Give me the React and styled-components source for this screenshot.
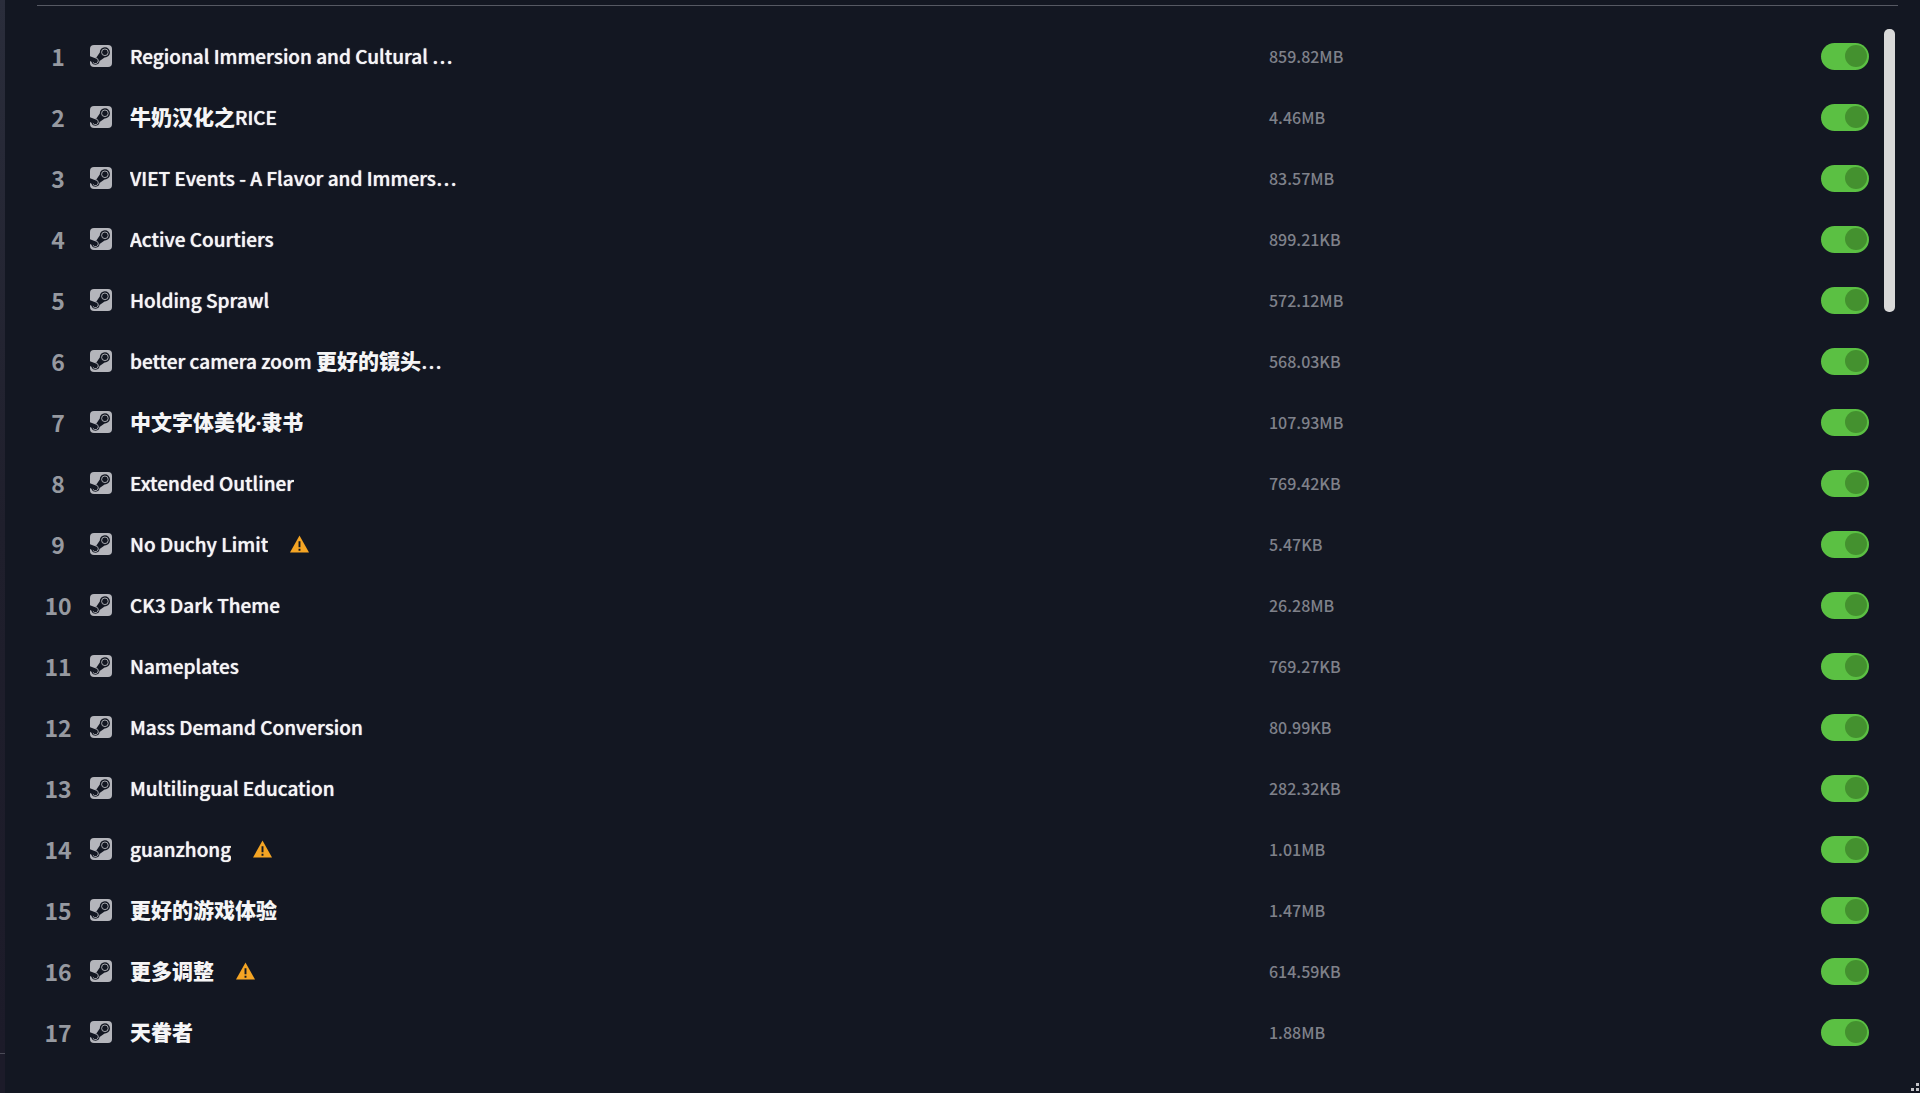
import styled, { createGlobalStyle } from 'styled-components';
import { useState } from 'react';

const INITIAL_MODS = [
	{ name: 'Regional Immersion and Cultural …', size: '859.82MB' },
	{ name: '牛奶汉化之RICE', size: '4.46MB' },
	{ name: 'VIET Events - A Flavor and Immers…', size: '83.57MB' },
	{ name: 'Active Courtiers', size: '899.21KB' },
	{ name: 'Holding Sprawl', size: '572.12MB' },
	{ name: 'better camera zoom 更好的镜头…', size: '568.03KB' },
	{ name: '中文字体美化·隶书', size: '107.93MB' },
	{ name: 'Extended Outliner', size: '769.42KB' },
	{ name: 'No Duchy Limit', size: '5.47KB', outdated: true },
	{ name: 'CK3 Dark Theme', size: '26.28MB' },
	{ name: 'Nameplates', size: '769.27KB' },
	{ name: 'Mass Demand Conversion', size: '80.99KB' },
	{ name: 'Multilingual Education', size: '282.32KB' },
	{ name: 'guanzhong', size: '1.01MB', outdated: true },
	{ name: '更好的游戏体验', size: '1.47MB' },
	{ name: '更多调整', size: '614.59KB', outdated: true },
	{ name: '天眷者', size: '1.88MB' },
];

const GlobalStyle = createGlobalStyle`
	* {
		box-sizing: border-box;
	}

	body {
		margin: 0;
		background: #131722;
		color: #f5f5f6;
		font-family: 'Noto Sans CJK SC', 'Noto Sans', sans-serif;
	}
`;

const Page = styled.div`
	display: flex;
	min-height: 100vh;
`;

const SideBar = styled.aside`
	display: flex;
	flex-direction: column;
	flex: 0 0 5px;
	padding-bottom: 39px;
	background: #1c1b29;
`;

const SideBarTop = styled.div`
	flex: 1;
	background: linear-gradient(#2a2d3b, #1f1f2c 50%, #1c1b29);
	border-bottom: 1px solid #4a4a56;
`;

const Main = styled.main`
	flex: 1;
	min-width: 0;
	padding: 5px 22px 0 32px;
`;

const ListArea = styled.div`
	display: flex;
	align-items: flex-start;
	justify-content: space-between;
	padding-right: 3px;
	border-top: 1px solid #565963;
`;

const ModTable = styled.table`
	flex: 1;
	margin: 19px 15px 0 0;
	table-layout: fixed;
	border-collapse: collapse;
`;

const Cell = styled.td`
	height: 61px;
	padding: 0;
	width: ${({ width = 'auto' }) => width};
	text-align: ${({ align = 'left' }) => align};
	vertical-align: middle;
`;

const Position = styled.span`
	display: block;
	font-size: 23px;
	font-weight: 700;
	line-height: 28px;
	color: #9699a0;
`;

const Source = styled.span`
	display: flex;
	padding-left: 11px;
`;

const NameBox = styled.div`
	display: flex;
	align-items: center;
	gap: 22px;
`;

const ModName = styled.span`
	overflow: hidden;
	font-size: 19px;
	font-weight: 500;
	line-height: 28px;
	white-space: nowrap;
	text-shadow: 0 0 1px currentColor;
`;

const HanRun = styled.span`
	display: inline-block;
	font-size: 21px;
	font-weight: 900;
	line-height: 28px;
	text-shadow: none;
`;

const MiddleDot = styled.span`
	font-family: 'Noto Sans', sans-serif;
	font-weight: 700;
`;

const SizeText = styled.span`
	display: block;
	font-size: 16px;
	font-weight: 500;
	line-height: 24px;
	color: #7f818a;
`;

const Toggle = styled.input`
	display: inline-flex;
	align-items: center;
	justify-content: flex-start;
	width: 48px;
	height: 27px;
	margin: 0;
	padding: 0 2px;
	appearance: none;
	border-radius: 14px;
	background: #4b4e58;
	vertical-align: middle;
	cursor: pointer;

	&::before {
		content: '';
		width: 22px;
		height: 22px;
		border-radius: 50%;
		background: #2f323c;
	}

	&:checked {
		justify-content: flex-end;
		background: #5bc043;
	}

	&:checked::before {
		background: #44912f;
	}
`;

const ScrollThumb = styled.div`
	flex: 0 0 11px;
	height: 283px;
	margin-top: 23px;
	border-radius: 5px;
	background: #d9d9d9;
`;

const ResizeGrip = styled.svg`
	position: fixed;
	right: 0;
	bottom: 0;
`;

const SteamIcon = () => (
	<svg width="22" height="22" viewBox="0 0 22 22" role="img" aria-label="Steam">
		<rect width="22" height="22" rx="4" fill="#b4b5bb" />
		<path
			d="M0 11.2L4.6 13.1L6.2 12.7L9.8 7.6A5.1 5.1 0 1 1 14.6 12.4L9.6 16A4.2 4.2 0 0 1 1.4 16.7L0 16.1Z"
			fill="#131722"
		/>
		<circle cx="14.9" cy="7.3" r="3.3" fill="none" stroke="#b4b5bb" strokeWidth="0.9" />
		<path
			d="M2.9 17.3A2.9 2.9 0 1 0 5.2 12.9"
			fill="none"
			stroke="#b4b5bb"
			strokeWidth="0.9"
		/>
	</svg>
);

const WarningIcon = () => (
	<svg width="19" height="18" viewBox="0 0 20 18" role="img" aria-label="Warning">
		<path d="M10 0L20 18H0Z" fill="#f5a524" />
		<path d="M9 6h2v6.5H9zM9 14h2v2H9z" fill="#131722" />
	</svg>
);

// Chinese runs are set larger and heavier than the latin text around them
const renderName = (name) =>
	name.split(/([\u4e00-\u9fff]+|·)/).map((part, i) => {
		if (i % 2 === 0) {
			return part;
		}

		return part === '·' ? (
			<MiddleDot key={i}>{part}</MiddleDot>
		) : (
			<HanRun key={i}>{part}</HanRun>
		);
	});

const ModRow = ({ mod, position, onToggle }) => (
	<tr>
		<Cell width="42px" align="center">
			<Position>{position}</Position>
		</Cell>
		<Cell width="51px">
			<Source>
				<SteamIcon />
			</Source>
		</Cell>
		<Cell>
			<NameBox>
				<ModName>{renderName(mod.name)}</ModName>
				{mod.outdated && <WarningIcon />}
			</NameBox>
		</Cell>
		<Cell width="552px">
			<SizeText>{mod.size}</SizeText>
		</Cell>
		<Cell width="48px" align="right">
			<Toggle
				type="checkbox"
				aria-label={mod.name}
				checked={mod.enabled}
				onChange={onToggle}
			/>
		</Cell>
	</tr>
);

const App = () => {
	const [mods, setMods] = useState(
		INITIAL_MODS.map((mod) => ({ ...mod, enabled: true })),
	);

	const onToggle = (index) => {
		setMods(
			mods.map((mod, i) => (i === index ? { ...mod, enabled: !mod.enabled } : mod)),
		);
	};

	return (
		<>
			<GlobalStyle />
			<Page>
				<SideBar>
					<SideBarTop />
				</SideBar>
				<Main>
					<ListArea>
						<ModTable>
							<tbody>
								{mods.map((mod, index) => (
									<ModRow
										key={mod.name}
										mod={mod}
										position={index + 1}
										onToggle={() => onToggle(index)}
									/>
								))}
							</tbody>
						</ModTable>
						<ScrollThumb />
					</ListArea>
				</Main>
			</Page>
			<ResizeGrip width="10" height="11" viewBox="0 0 10 11" fill="#c4c5c9">
				<rect x="6" y="1" width="3" height="3" />
				<rect x="1" y="6" width="3" height="3" />
				<rect x="6" y="6" width="3" height="3" />
			</ResizeGrip>
		</>
	);
};

export default App;
